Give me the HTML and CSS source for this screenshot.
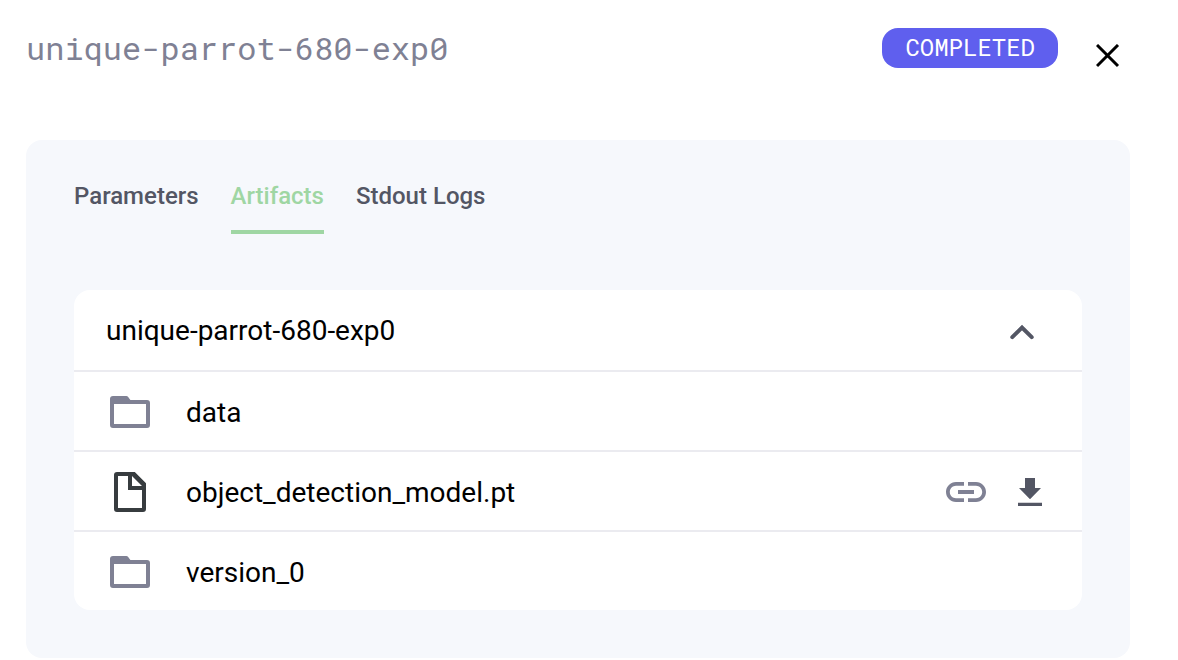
FILE: index.html
```html
<!DOCTYPE html>
<html lang="en">
<head>
<meta charset="utf-8">
<meta name="viewport" content="width=device-width, initial-scale=1">
<title>unique-parrot-680-exp0</title>
<link rel="stylesheet" href="styles.css">
</head>
<body>
<main class="page">
  <header class="header">
    <h1 class="title">unique-parrot-680-exp0</h1>
    <span class="badge">COMPLETED</span>
    <button class="close" type="button" aria-label="Close">
      <svg width="24" height="24" viewBox="0 0 24 24" fill="none" stroke="currentColor" stroke-width="3" aria-hidden="true"><path d="M1 1l21 21M22 1l-21 21"/></svg>
    </button>
  </header>

  <section class="panel">
    <div class="tabs" role="tablist">
      <button class="tab" type="button" role="tab" aria-selected="false">Parameters</button>
      <button class="tab tab-active" type="button" role="tab" aria-selected="true">Artifacts</button>
      <button class="tab" type="button" role="tab" aria-selected="false">Stdout Logs</button>
    </div>

    <div class="card" role="tabpanel" aria-label="Artifacts">
      <button class="card-header" type="button" aria-expanded="true">
        <span>unique-parrot-680-exp0</span>
        <svg class="chevron" width="24" height="24" viewBox="0 0 24 24" fill="none" stroke="currentColor" stroke-width="4" stroke-linecap="round" aria-hidden="true"><path d="M2.300 18.200L12 8.500l9.700 9.700" stroke-linejoin="miter"/></svg>
      </button>
      <ul class="files">
        <li class="row">
          <svg class="icon icon-folder" viewBox="0 0 24 24" aria-hidden="true"><path fill-rule="evenodd" d="M3.500 4H10.200Q10.700 4 11 4.400L12.200 6H20.500Q22 6 22 7.500V18.500Q22 20 20.500 20H3.500Q2 20 2 18.500V5.500Q2 4 3.500 4ZM4 8V18H20V8Z"/></svg>
          <span class="name">data</span>
        </li>
        <li class="row">
          <svg class="icon icon-file" viewBox="0 0 24 24" aria-hidden="true"><path fill-rule="evenodd" d="M5.500 2H14.400L20 7.600V20.500Q20 22 18.500 22H5.500Q4 22 4 20.500V3.500Q4 2 5.500 2ZM6 4V20H18V11H11V4ZM13 4V9H18Z"/></svg>
          <span class="name">object_detection_model.pt</span>
          <span class="actions">
            <button class="action action-link" type="button" aria-label="Copy link">
              <svg class="icon" viewBox="0 0 24 24" aria-hidden="true"><path d="M3.900 12c0-1.710 1.390-3.100 3.100-3.100h4V7H7c-2.760 0-5 2.240-5 5s2.240 5 5 5h4v-1.900H7c-1.710 0-3.100-1.390-3.100-3.100zM8 13h8v-2H8v2zm9-6h-4v1.900h4c1.710 0 3.100 1.390 3.100 3.100s-1.390 3.100-3.100 3.100h-4V17h4c2.760 0 5-2.240 5-5s-2.240-5-5-5z"/></svg>
            </button>
            <button class="action action-download" type="button" aria-label="Download">
              <svg class="icon" viewBox="0 0 48 48" aria-hidden="true"><path d="M19 10H29V20H35L24 31.200L13 20H19ZM12 34.700H36V38H12Z"/></svg>
            </button>
          </span>
        </li>
        <li class="row">
          <svg class="icon icon-folder" viewBox="0 0 24 24" aria-hidden="true"><path fill-rule="evenodd" d="M3.500 4H10.200Q10.700 4 11 4.400L12.200 6H20.500Q22 6 22 7.500V18.500Q22 20 20.500 20H3.500Q2 20 2 18.500V5.500Q2 4 3.500 4ZM4 8V18H20V8Z"/></svg>
          <span class="name">version_0</span>
        </li>
      </ul>
    </div>
  </section>
</main>
</body>
</html>
```

FILE: styles.css
```css
* {
  box-sizing: border-box;
}

body {
  margin: 0;
  background: #fff;
  color: #000;
  font-family: Roboto, "Liberation Sans", sans-serif;
}

button {
  margin: 0;
  padding: 0;
  border: 0;
  background: none;
  color: inherit;
  font: inherit;
  cursor: pointer;
}

svg {
  display: block;
}

.page {
  padding: 28px 48px 0 26px;
}

.header {
  display: flex;
  align-items: flex-start;
  margin-bottom: 56px;
}

.title {
  flex: 1;
  margin: 0;
  color: #7f8194;
  font-family: "Roboto Mono", "Liberation Mono", monospace;
  font-size: 32px;
  font-weight: 400;
  line-height: 40px;
}

.badge {
  padding: 0 23px 2px;
  border-radius: 16px;
  background: #5f5fee;
  color: #fff;
  font-family: "Roboto Mono", "Liberation Mono", monospace;
  font-size: 24px;
  line-height: 38px;
}

.close {
  display: grid;
  place-items: center;
  width: 44px;
  height: 56px;
  margin-left: 28px;
}

.panel {
  padding: 40px 48px 48px;
  border-radius: 16px;
  background: #f6f8fc;
}

.tabs {
  display: flex;
  gap: 32px;
  margin-bottom: 56px;
}

.tab {
  padding-bottom: 18px;
  border-bottom: 4px solid transparent;
  color: #535664;
  font-size: 24px;
  font-weight: 500;
  line-height: 32px;
}

.tab-active {
  border-color: #9fd6a3;
  color: #9fd6a3;
}

.card {
  overflow: hidden;
  border-radius: 16px;
  background: #fff;
  font-size: 28px;
  line-height: 32px;
}

.card-header {
  display: flex;
  align-items: center;
  justify-content: space-between;
  width: 100%;
  padding: 25px 48px 23px 32px;
  text-align: left;
}

.chevron {
  color: #535664;
}

.files {
  margin: 0;
  padding: 0;
  list-style: none;
}

.row {
  display: flex;
  align-items: center;
  padding: 16px 28px 14px 32px;
  border-top: 2px solid #ebebf0;
}

.icon {
  width: 48px;
  height: 48px;
  fill: currentColor;
}

.icon-folder {
  color: #7f8194;
}

.icon-file {
  color: #373c3f;
}

.name {
  flex: 1;
  margin-left: 32px;
  padding-top: 2px;
}

.actions {
  display: flex;
  gap: 16px;
}

.action-link {
  color: #7f8194;
}

.action-download {
  color: #535664;
}
```
